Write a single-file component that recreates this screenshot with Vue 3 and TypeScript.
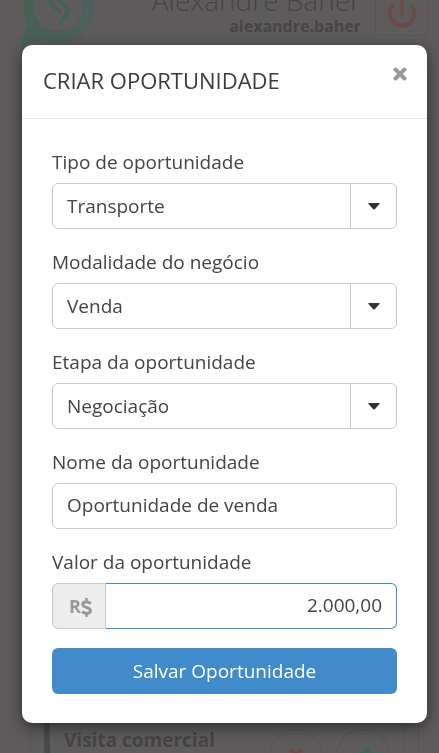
<script setup lang="ts">
import { ref } from 'vue'

interface SelectField {
  id: string
  label: string
  value: string
  options: string[]
}

const selects = ref<SelectField[]>([
  { id: 'tipo', label: 'Tipo de oportunidade', value: 'Transporte', options: ['Transporte'] },
  { id: 'modalidade', label: 'Modalidade do negócio', value: 'Venda', options: ['Venda'] },
  { id: 'etapa', label: 'Etapa da oportunidade', value: 'Negociação', options: ['Negociação'] },
])
const nome = ref('Oportunidade de venda')
const valor = ref('2.000,00')
</script>

<template>
  <div class="page">
    <header class="topbar">
      <svg class="logo" viewBox="0 0 76 50" aria-hidden="true">
        <defs>
          <linearGradient id="logo-fill" x1="0" y1="0" x2="1" y2="0">
            <stop offset="0" stop-color="#466254" />
            <stop offset="1" stop-color="#4f5f5d" />
          </linearGradient>
        </defs>
        <path
          fill="url(#logo-fill)"
          fill-rule="evenodd"
          d="M4 0C3 9 4 16 8 23L0 48L22 40C27 42 33 43 40 43C58 43 74 29 74 8V0H62V7C62 21 52 31 39 31C32 31 29 27 24 27C21 27 19 28 18 30L20 23C16 18 14 12 14 0Z"
        />
        <path fill="none" stroke="#466254" stroke-width="4" stroke-linejoin="round" d="M39 -1L48 9V12L39 24M29 -1L33 6L41 13" />
      </svg>
      <div class="user">
        <span class="user-name">Alexandre Baher</span>
        <strong class="user-login">alexandre.baher</strong>
      </div>
      <button class="power" type="button" aria-label="Sair">
        <svg viewBox="0 0 30 24" aria-hidden="true">
          <path d="M6 -1A12.300 12.300 0 1 0 24 -1" />
          <path d="M15 -4V8" stroke-linecap="round" />
        </svg>
      </button>
    </header>

    <section class="activity">
      <div class="activity-card">
        <strong class="activity-title">Visita comercial</strong>
        <button class="round" type="button" aria-label="Cancelar">
          <svg viewBox="0 0 52 30" aria-hidden="true"><path class="cancel" d="M21 20L33 32M31 20L19 32" /></svg>
        </button>
        <button class="round" type="button" aria-label="Enviar">
          <svg viewBox="0 0 52 30" aria-hidden="true">
            <path class="send" fill-rule="evenodd" d="M34 15L18 26L22 29H33ZM31 20L23 28H26Z" />
          </svg>
        </button>
      </div>
    </section>

    <div class="overlay">
      <div class="modal" role="dialog" aria-modal="true" aria-labelledby="modal-title">
        <div class="modal-header">
          <h1 id="modal-title">CRIAR OPORTUNIDADE</h1>
          <button class="close" type="button" aria-label="Fechar">
            <svg viewBox="0 0 14 14" aria-hidden="true"><path d="M2.5 2.5L11.5 11.5M11.5 2.5L2.5 11.5" /></svg>
          </button>
        </div>
        <form class="modal-body" @submit.prevent>
          <div v-for="field in selects" :key="field.id" class="field">
            <label :for="field.id">{{ field.label }}</label>
            <div class="select-box">
              <select :id="field.id" v-model="field.value" class="control">
                <option v-for="option in field.options" :key="option">{{ option }}</option>
              </select>
              <span class="caret">
                <svg viewBox="0 0 12 7" aria-hidden="true"><path d="M1 0H11Q12.300 .3 11.300 1.300L7 6Q6 7 5 6L.7 1.300Q-.3 .3 1 0Z" /></svg>
              </span>
            </div>
          </div>
          <div class="field">
            <label for="nome">Nome da oportunidade</label>
            <input id="nome" v-model="nome" class="control text-input" type="text" />
          </div>
          <div class="field">
            <label for="valor">Valor da oportunidade</label>
            <div class="money">
              <span class="prefix">
                R<svg viewBox="0 0 11 21" aria-hidden="true">
                  <path d="M5.500 2V5M5.500 18V21" stroke-width="2.400" />
                  <path d="M9.800 7.500C7.500 5.700 1.700 5 1.700 8.400C1.700 12 9.500 10.800 9.500 14.700C9.500 18.300 3.700 18 1 15.500" stroke-width="3" />
                </svg>
              </span>
              <input id="valor" v-model="valor" class="control text-input amount" type="text" inputmode="decimal" />
            </div>
          </div>
          <button class="save" type="submit">Salvar Oportunidade</button>
        </form>
      </div>
    </div>
  </div>
</template>

<style>
body {
  margin: 0;
  background: #5f5c5d;
}
</style>

<style scoped>
.page {
  display: flex;
  flex-direction: column;
  justify-content: space-between;
  min-height: 100vh;
  overflow: hidden;
  background: #5f5c5d;
  color: #464445;
  font-family: "Open Sans", "Noto Sans", sans-serif;
}
.page * {
  box-sizing: border-box;
}
button {
  padding: 0;
  font: inherit;
  cursor: pointer;
}
svg {
  display: block;
}
.topbar {
  display: flex;
  align-items: flex-start;
  padding: 0 10px 0 20px;
}
.logo {
  flex: none;
  width: 76px;
  height: 50px;
}
.user {
  display: flex;
  flex: 1;
  flex-direction: column;
  align-items: flex-end;
  margin-top: -16px;
  padding-right: 14px;
}
.user-name {
  font-size: 28px;
  font-weight: 300;
  line-height: 32px;
  white-space: nowrap;
}
.user-login {
  font-size: 16px;
  line-height: 20px;
}
.power {
  flex: none;
  width: 54px;
  height: 56px;
  margin-top: -20px;
  padding: 19px 11px 0;
  border: 1px solid #585556;
  border-radius: 6px;
  background: transparent;
}
.power svg {
  width: 30px;
  height: 24px;
  overflow: visible;
  fill: none;
  stroke: #684c47;
  stroke-width: 4;
}
.activity {
  height: 30px;
  margin: 0 20px 0 30px;
  padding: 0 14px 0 13px;
  border: solid #585657;
  border-width: 0 1px;
}
.activity-card {
  display: flex;
  height: 30px;
  padding-right: 13px;
  gap: 13px;
  overflow: hidden;
  border-right: 1px solid #585657;
  border-left: 6px solid #4b4b4c;
}
.activity-title {
  flex: 1;
  padding-left: 14px;
  font-size: 19px;
  line-height: 34px;
  white-space: nowrap;
}
.round {
  flex: none;
  width: 54px;
  height: 54px;
  margin-top: 6px;
  border: 1px solid #555354;
  border-radius: 50%;
  background: transparent;
}
.round svg {
  width: 52px;
  margin-bottom: 22px;
  overflow: visible;
}
.cancel {
  stroke: #684c47;
  stroke-width: 4;
  stroke-linecap: round;
}
.send {
  fill: #456151;
}
.overlay {
  position: fixed;
  inset: 0;
  padding: 45px 12px 30px 22px;
  overflow: hidden;
}
.modal {
  border-radius: 10px;
  background: #fff;
  box-shadow: 0 4px 16px rgba(0, 0, 0, 0.55);
  color: #444;
}
.modal-header {
  display: flex;
  align-items: flex-start;
  justify-content: space-between;
  padding: 21px 20px 24px 21px;
  border-bottom: 1px solid #e2ebe9;
}
h1 {
  margin: 0;
  color: #3b3b3b;
  font-size: 22px;
  font-weight: 400;
  line-height: 28px;
}
.close {
  width: 14px;
  height: 14px;
  margin-top: 1px;
  border: 0;
  background: transparent;
}
.close svg {
  width: 14px;
  fill: none;
  stroke: #999;
  stroke-width: 4;
  stroke-linecap: round;
}
.modal-body {
  padding: 30px 30px 29px;
}
.field {
  display: flex;
  flex-direction: column;
  gap: 8px;
}
.field + .field {
  margin-top: 20px;
}
label {
  font-size: 19px;
  line-height: 26px;
}
.control {
  display: block;
  width: 100%;
  min-width: 0;
  height: 46px;
  padding: 0 14px;
  border: 1px solid #c8c8c8;
  border-radius: 6px;
  outline: 0;
  appearance: none;
  background: #fff;
  color: inherit;
  font-family: inherit;
  font-size: 19px;
}
.text-input {
  padding-bottom: 2px;
}
.select-box {
  display: grid;
}
.select-box > * {
  grid-area: 1 / 1;
}
.caret {
  display: flex;
  align-items: center;
  justify-content: center;
  justify-self: end;
  width: 47px;
  border-left: 1px solid #c8c8c8;
  pointer-events: none;
}
.caret svg {
  width: 12px;
  height: 7px;
  fill: #333;
}
.money {
  display: flex;
}
.prefix {
  display: flex;
  flex: none;
  align-items: center;
  justify-content: center;
  width: 54px;
  padding-left: 3px;
  border: 1px solid #c8c8c8;
  border-radius: 6px 0 0 6px;
  background: #ecedee;
  color: #999;
  font-size: 18px;
  font-weight: 700;
}
.prefix svg {
  width: 11px;
  height: 21px;
  fill: none;
  stroke: #999;
}
.amount {
  border-color: #428bca;
  border-left: 0;
  border-radius: 0 6px 6px 0;
  text-align: right;
}
.save {
  display: block;
  width: 100%;
  height: 46px;
  margin-top: 19px;
  border: 0;
  border-radius: 6px;
  background: #428bca;
  color: #fff;
  font-size: 19px;
  font-weight: 500;
}
</style>
